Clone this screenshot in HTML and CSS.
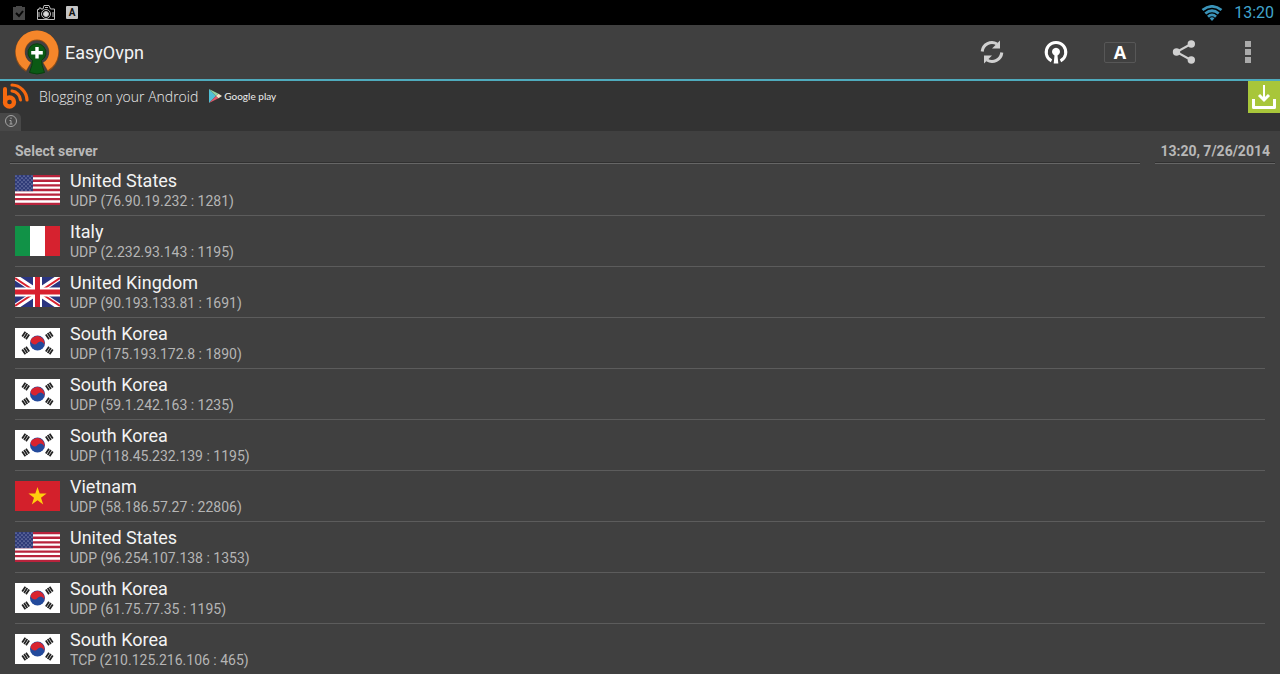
FILE: index.html
```html
<!DOCTYPE html>
<html lang="en">
<head>
    <meta charset="UTF-8">
    <meta name="viewport" content="width=device-width, initial-scale=1.0">
    <title>EasyOvpn</title>
    <link rel="stylesheet" href="styles.css">
</head>
<body>
    <!-- Flags used by the server list -->
    <svg class="sprites" aria-hidden="true">
        <pattern id="stars" width="4" height="4" patternUnits="userSpaceOnUse">
            <circle cx="1" cy="1" r=".6" fill="#c5cbe2"/>
            <circle cx="3" cy="3" r=".6" fill="#c5cbe2"/>
        </pattern>
        <symbol id="us" viewBox="0 0 45 30">
            <path fill="#fff" d="M0 0h45v30H0z"/>
            <path stroke="#b8233c" stroke-width="2.31" d="M0 1.15h45M0 5.77h45M0 10.38h45M0 15h45M0 19.6h45M0 24.2h45M0 28.85h45"/>
            <path fill="#2f3b78" d="M0 0h18v16.2H0z"/>
            <path fill="url(#stars)" d="M0 0h18v16H0z"/>
        </symbol>
        <symbol id="it" viewBox="0 0 45 30">
            <path fill="#119247" d="M0 0h15v30H0z"/>
            <path fill="#fff" d="M15 0h15v30H15z"/>
            <path fill="#d6222f" d="M30 0h15v30H30z"/>
        </symbol>
        <symbol id="gb" viewBox="0 0 45 30">
            <path fill="#2b3580" d="M0 0h45v30H0z"/>
            <path stroke="#fff" stroke-width="6" d="M0 0l45 30M45 0L0 30"/>
            <path stroke="#d8202f" stroke-width="2" d="M0 1l21 14M24 15l21 14M45 1L24 15M21 15L0 29"/>
            <path stroke="#fff" stroke-width="9" d="M22.5 0v30M0 15h45"/>
            <path stroke="#d8202f" stroke-width="5" d="M22.5 0v30M0 15h45"/>
        </symbol>
        <symbol id="kr" viewBox="0 0 45 30">
            <path fill="#fff" d="M0 0h45v30H0z"/>
            <circle cx="22.5" cy="15" r="7.5" fill="#234a9c"/>
            <path fill="#d8232f" d="M16.2 11a7.5 7.5 0 0 1 12.6 8A3.75 3.75 0 0 0 22.5 15 3.75 3.75 0 0 1 16.2 11z"/>
            <g stroke="#222" stroke-width="1.8">
                <path d="M7.2 8.6l3.2-4.8M9.1 9.9l3.2-4.8M11 11.2l3.2-4.8"/>
                <path d="M37.8 21.4l-3.2 4.8M35.9 20.1l-3.2 4.8M34 18.8l-3.2 4.8"/>
                <path d="M7.2 21.4l3.2 4.8M9.1 20.1l3.2 4.8M11 18.8l3.2 4.8"/>
                <path d="M37.8 8.6l-3.2-4.8M35.9 9.9l-3.2-4.8M34 11.2l-3.2-4.8"/>
            </g>
        </symbol>
        <symbol id="vn" viewBox="0 0 45 30">
            <path fill="#d3202b" d="M0 0h45v30H0z"/>
            <path fill="#ffcf0d" d="M22.5 6l2.2 6.6h6.9L26 16.7l2.2 6.7-5.7-4.2-5.7 4.2 2.2-6.7-5.6-4.1h6.9z"/>
        </symbol>
    </svg>

    <div class="statusbar">
        <div class="notifications">
            <svg width="14" height="14" viewBox="0 0 14 14">
                <path fill="#484848" d="M1 1h3V0h6v1h3v13H1z"/>
                <path fill="none" stroke="#080808" stroke-width="2" d="M4 7l3 3 4-5"/>
            </svg>
            <svg width="18" height="16" viewBox="0 0 18 16" fill="none" stroke="#bdbdbd">
                <path d="M.5 4.5H2V3h2v1h2L7 .5h5L13.500 4h4v10.500H.5z"/>
                <circle cx="9" cy="9" r="4.5"/>
                <circle cx="9" cy="9" r="2.5" fill="#ddd"/>
                <path d="M2 7v5M16 7v5M8 2.5h3"/>
            </svg>
            <span class="lang">A</span>
        </div>
        <div class="system">
            <svg width="22" height="16" viewBox="0 0 22 16">
                <g fill="none" stroke="#3a93b8" stroke-width="2.8">
                    <path d="M1.5 5Q11-2.200 20.500 5"/>
                    <path d="M4.300 8.500Q11 3 17.700 8.500"/>
                    <path d="M7 11.800Q11 8 15 11.800"/>
                </g>
                <path fill="#3a93b8" d="M8.600 13.200Q11 11.200 13.400 13.200L11 16z"/>
            </svg>
            <span>13:20</span>
        </div>
    </div>

    <header class="actionbar">
        <svg width="46" height="46" viewBox="0 0 46 46">
            <path fill="none" stroke="#8c4d19" stroke-width="10" d="M14.500 38.300A17 17 0 1 1 31.500 38.300"/>
            <path fill="none" stroke="#f5862a" stroke-width="9" d="M14.500 37.300A16.800 16.800 0 1 1 31.500 37.300"/>
            <path fill="#0b5a14" stroke="#0a3d0d" d="M18.500 31.500a9 9 0 1 1 9 0q0 4 3 12-7.500 3-15 0 3-8 3-12z"/>
            <path stroke="#fff" stroke-width="3.4" d="M23 18v11.500M17.200 23.700h11.600"/>
        </svg>
        <h1>EasyOvpn</h1>
        <nav>
            <button aria-label="Refresh">
                <svg width="32" height="32" viewBox="0 0 32 32" fill="none" stroke="#d0d0d0" stroke-width="3">
                    <path d="M6.200 15.500A9.800 9.800 0 0 1 21 8M25.800 16.500A9.800 9.800 0 0 1 11 24"/>
                    <path fill="#d0d0d0" stroke="none" d="M24 4.500v8h-8zM8 27.500v-8h8z"/>
                </svg>
            </button>
            <button aria-label="Connect">
                <svg width="32" height="32" viewBox="0 0 32 32">
                    <path fill="none" stroke="#fff" stroke-width="3" d="M11.500 24.900A9.800 9.800 0 1 1 20.500 24.900"/>
                    <path fill="#fff" d="M14.500 19.500a4 4 0 1 1 3 0l.8 8h-4.600z"/>
                </svg>
            </button>
            <button aria-label="Auto"><span class="auto">A</span></button>
            <button aria-label="Share">
                <svg width="32" height="32" viewBox="0 0 32 32" fill="#d0d0d0">
                    <path fill="none" stroke="#d0d0d0" stroke-width="2" d="M23 8L8.500 16 23 24"/>
                    <circle cx="8.500" cy="16" r="3.700"/><circle cx="23.300" cy="8" r="3.700"/><circle cx="23.300" cy="24" r="3.700"/>
                </svg>
            </button>
            <button aria-label="More options">
                <svg width="32" height="32" viewBox="0 0 32 32" fill="#aaa">
                    <path d="M13 5h6v6h-6zM13 13h6v6h-6zM13 21h6v6h-6z"/>
                </svg>
            </button>
        </nav>
    </header>

    <div class="ad">
        <a class="ad-link" href="#">
            <svg width="30" height="29" viewBox="0 0 30 29" fill="none" stroke="#f7690f">
                <path stroke-width="4" stroke-linecap="round" d="M5 7v13"/>
                <circle cx="9.500" cy="20" r="4.500" stroke-width="4.400"/>
                <path stroke-width="3" stroke-linecap="round" d="M12 9A9.500 9.500 0 0 1 20.500 18"/>
                <path stroke-width="3.200" stroke-linecap="round" d="M12 3A15.500 15.500 0 0 1 27 18"/>
            </svg>
            <span class="ad-title">Blogging on your Android</span>
            <svg width="13" height="14" viewBox="0 0 13 14">
                <path fill="#50bfd5" d="M0 0l7 7-7 7z"/>
                <path fill="#8fd3a0" d="M0 0l9.500 4.800L7 7z"/>
                <path fill="#e25768" d="M0 14l9.500-4.800L7 7z"/>
                <path fill="#f3e1c4" d="M9.500 4.800L13 7 9.500 9.200 7 7z"/>
            </svg>
            <span class="ad-store">Google play</span>
        </a>
        <a class="download" href="#" aria-label="Download">
            <svg width="32" height="32" viewBox="0 0 32 32" fill="none" stroke="#fff">
                <path stroke-width="2" d="M16 4v15"/>
                <path stroke-width="3" d="M11 14l5 5 5-5"/>
                <path stroke-width="3" stroke-linejoin="round" d="M5.500 18v8.500h21V18"/>
            </svg>
        </a>
        <button class="info" aria-label="Ad info">
            <svg width="14" height="14" viewBox="0 0 14 14" fill="none" stroke="#a5a5a5">
                <circle cx="7" cy="7" r="5.500"/>
                <path d="M7 3.500V5M5.500 6.500H7V10M5.500 10h3"/>
            </svg>
        </button>
    </div>

    <main>
        <div class="list-head">
            <h2>Select server</h2>
            <time datetime="2014-07-26T13:20">13:20, 7/26/2014</time>
        </div>
        <ul class="servers">
            <li><button><svg class="flag"><use href="#us"/></svg><span class="server"><b>United States</b><small>UDP (76.90.19.232 : 1281)</small></span></button></li>
            <li><button><svg class="flag"><use href="#it"/></svg><span class="server"><b>Italy</b><small>UDP (2.232.93.143 : 1195)</small></span></button></li>
            <li><button><svg class="flag"><use href="#gb"/></svg><span class="server"><b>United Kingdom</b><small>UDP (90.193.133.81 : 1691)</small></span></button></li>
            <li><button><svg class="flag"><use href="#kr"/></svg><span class="server"><b>South Korea</b><small>UDP (175.193.172.8 : 1890)</small></span></button></li>
            <li><button><svg class="flag"><use href="#kr"/></svg><span class="server"><b>South Korea</b><small>UDP (59.1.242.163 : 1235)</small></span></button></li>
            <li><button><svg class="flag"><use href="#kr"/></svg><span class="server"><b>South Korea</b><small>UDP (118.45.232.139 : 1195)</small></span></button></li>
            <li><button><svg class="flag"><use href="#vn"/></svg><span class="server"><b>Vietnam</b><small>UDP (58.186.57.27 : 22806)</small></span></button></li>
            <li><button><svg class="flag"><use href="#us"/></svg><span class="server"><b>United States</b><small>UDP (96.254.107.138 : 1353)</small></span></button></li>
            <li><button><svg class="flag"><use href="#kr"/></svg><span class="server"><b>South Korea</b><small>UDP (61.75.77.35 : 1195)</small></span></button></li>
            <li><button><svg class="flag"><use href="#kr"/></svg><span class="server"><b>South Korea</b><small>TCP (210.125.216.106 : 465)</small></span></button></li>
        </ul>
    </main>
</body>
</html>
```
FILE: styles.css
```css
* {
    box-sizing: border-box;
}
body {
    margin: 0;
    background-color: #404040;
    color: #f3f3f3;
    font-family: Roboto, "Liberation Sans", sans-serif;
}
svg {
    display: block;
    flex: none;
}
button {
    padding: 0;
    border: 0;
    background: none;
    color: inherit;
    font: inherit;
    cursor: pointer;
}
.sprites {
    position: absolute;
    width: 0;
    height: 0;
}

/* Status bar */
.statusbar {
    display: flex;
    justify-content: space-between;
    align-items: center;
    height: 25px;
    padding: 0 6px 0 12px;
    background-color: #000;
}
.notifications, .system {
    display: flex;
    align-items: center;
    gap: 11px;
}
.lang {
    width: 12px;
    border-radius: 1px;
    background-color: #c4c4c4;
    color: #111;
    font-size: 10px;
    font-weight: 700;
    line-height: 13px;
    text-align: center;
}
.system {
    color: #42a5cd;
    font-size: 16px;
}

/* Action bar */
.actionbar {
    display: flex;
    align-items: center;
    height: 56px;
    padding-left: 14px;
    border-bottom: 2px solid #4fabbd;
}
.actionbar h1 {
    flex: 1;
    margin: 0 0 0 5px;
    font-size: 18px;
    font-weight: 400;
}
.actionbar nav {
    display: flex;
}
.actionbar button {
    display: flex;
    justify-content: center;
    align-items: center;
    width: 64px;
    height: 54px;
}
.auto {
    width: 32px;
    border: 1px solid #575757;
    border-radius: 2px;
    color: #fff;
    font-family: "Open Sans", sans-serif;
    font-size: 18px;
    font-weight: 700;
    line-height: 19px;
}

/* Ad banner */
.ad {
    display: grid;
    grid-template-columns: 1fr 32px;
    grid-template-rows: 32px 18px;
    background-color: #333;
}
.ad-link {
    display: flex;
    align-items: center;
    padding-bottom: 2px;
    color: #eee;
    text-decoration: none;
}
.ad-title {
    margin: 0 11px 0 9px;
    font-family: "Open Sans", sans-serif;
    font-size: 14px;
    font-weight: 300;
}
.ad-store {
    margin-left: 2px;
    font-family: Lato, sans-serif;
    font-size: 10px;
}
.download {
    background-color: #a8c63a;
}
.info {
    display: flex;
    justify-content: center;
    width: 21px;
    padding-top: 1px;
    border-radius: 0 5px 0 0;
    background-color: #484848;
}

/* Server list */
.list-head {
    display: flex;
    gap: 15px;
    height: 34px;
    padding: 8px 5px 0 10px;
    color: #b8b8b8;
    font-size: 14px;
    font-weight: 700;
    line-height: 24px;
}
.list-head h2, .list-head time {
    height: 25px;
    margin: 0;
    padding: 0 5px;
    border-bottom: 1px solid #666;
    box-shadow: inset 0 -1px #303030;
    font-size: 14px;
}
.list-head h2 {
    flex: 1;
}
.servers {
    margin: 0;
    padding: 0 15px;
    list-style: none;
}
.servers li + li {
    border-top: 1px solid #5c5c5c;
}
.servers button {
    display: flex;
    align-items: center;
    gap: 10px;
    width: 100%;
    height: 50px;
    text-align: left;
}
.flag {
    width: 45px;
    height: 30px;
}
.server b, .server small {
    display: block;
    font-weight: 400;
}
.server b {
    font-size: 18px;
    line-height: 22px;
}
.server small {
    color: #b5b5b5;
    font-size: 14px;
    line-height: 18px;
}
```
